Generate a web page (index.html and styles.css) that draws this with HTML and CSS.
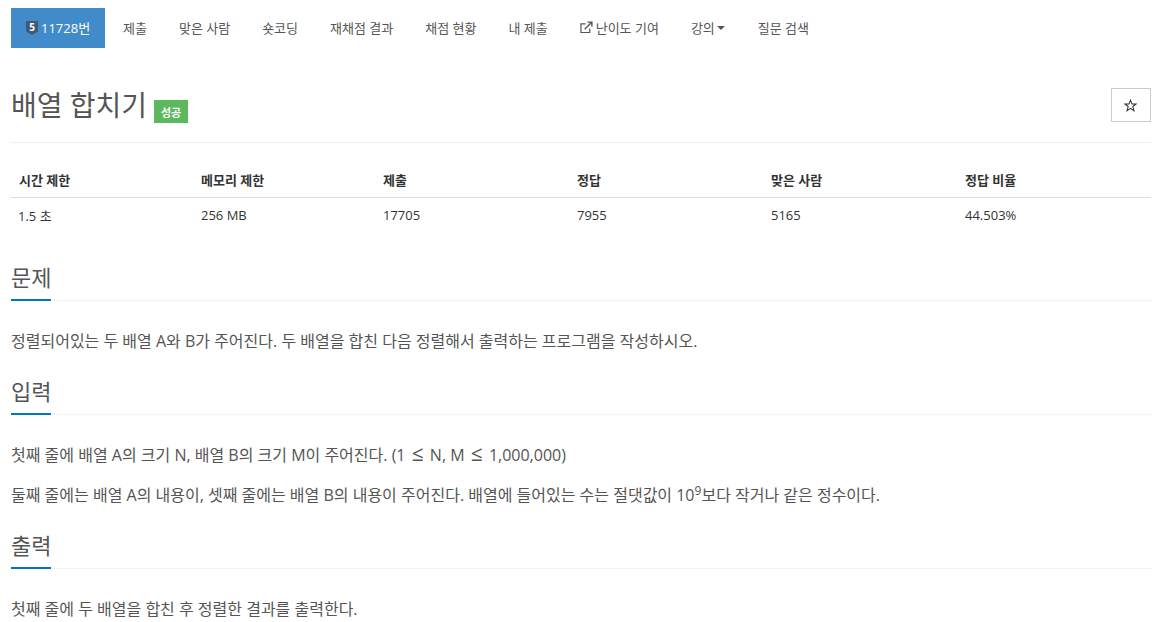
FILE: index.html
```html
<!DOCTYPE html>
<html lang="ko">
<head>
<meta charset="utf-8">
<title>배열 합치기</title>
<link rel="stylesheet" href="styles.css">
</head>
<body>
<div class="page">
  <nav class="nav">
    <a class="nav-item active"><svg class="tier" viewBox="0 0 12 14" width="12" height="14"><path d="M0 0H12V10.5L6 14L0 10.5Z" fill="#3f5a75"/><text x="6" y="9.6" text-anchor="middle" class="tier-num">5</text></svg><span>11728번</span></a>
    <a class="nav-item">제출</a>
    <a class="nav-item">맞은 사람</a>
    <a class="nav-item">숏코딩</a>
    <a class="nav-item">재채점 결과</a>
    <a class="nav-item">채점 현황</a>
    <a class="nav-item">내 제출</a>
    <a class="nav-item"><svg class="ext" viewBox="0 0 14 14" width="13" height="13"><path d="M10.5 8V12.4H1V3H6" fill="none" stroke="#555" stroke-width="1.3"/><path d="M5 9L12 2M8 1.2H12.8V6" fill="none" stroke="#555" stroke-width="1.5"/></svg>난이도 기여</a>
    <a class="nav-item">강의<i class="caret"></i></a>
    <a class="nav-item">질문 검색</a>
  </nav>

  <header class="title-row">
    <div class="title-main"><h1>배열 합치기</h1><span class="badge">성공</span></div>
    <button class="star-btn" type="button"><svg viewBox="0 0 14 14" width="13" height="13"><path d="M7 1.2L8.6 5.4H13L9.5 8.1L10.8 12.6L7 10L3.2 12.6L4.5 8.1L1 5.4H5.4Z" fill="none" stroke="#333" stroke-width="1.1"/></svg></button>
  </header>

  <table class="stats">
    <thead>
      <tr><th class="c1">시간 제한</th><th class="c2">메모리 제한</th><th class="c3">제출</th><th class="c4">정답</th><th class="c5">맞은 사람</th><th>정답 비율</th></tr>
    </thead>
    <tbody>
      <tr><td>1.5 초</td><td>256 MB</td><td>17705</td><td>7955</td><td>5165</td><td>44.503%</td></tr>
    </tbody>
  </table>

  <section class="sec first">
    <h2><span>문제</span></h2>
    <p>정렬되어있는 두 배열 A와 B가 주어진다. 두 배열을 합친 다음 정렬해서 출력하는 프로그램을 작성하시오.</p>
  </section>
  <section class="sec">
    <h2><span>입력</span></h2>
    <p>첫째 줄에 배열 A의 크기 N, 배열 B의 크기 M이 주어진다. (1 <span class="wide">≤</span> N, M <span class="wide">≤</span> 1,000,000)</p>
    <p>둘째 줄에는 배열 A의 내용이, 셋째 줄에는 배열 B의 내용이 주어진다. 배열에 들어있는 수는 절댓값이 10<sup>9</sup>보다 작거나 같은 정수이다.</p>
  </section>
  <section class="sec">
    <h2><span>출력</span></h2>
    <p>첫째 줄에 두 배열을 합친 후 정렬한 결과를 출력한다.</p>
  </section>
</div>
</body>
</html>
```
FILE: styles.css
```css
* { box-sizing: border-box; }
html, body { margin: 0; height: 622px; overflow: hidden; background: #fff; }
body { font-family: "Open Sans", "Noto Sans CJK KR", sans-serif; color: #333; font-size: 14px; }
.page { padding: 8px 7px 0 11px; }

.nav { display: flex; height: 40px; gap: 2px; }
.nav-item { display: flex; align-items: center; padding: 0 15px 2px; font-size: 13px; color: #555; white-space: nowrap; }
.nav-item.active { background: #428bca; color: #fff; width: 94px; margin-right: 1px; }
.tier { margin-right: 3px; margin-top: 2px; flex: none; }
.tier-num { font: bold 10px "Open Sans", sans-serif; fill: #fff; }
.ext { margin-right: 3px; }
.caret { width: 0; height: 0; margin: 2px 1px 0 2px; border-top: 4px solid #555; border-left: 4px solid transparent; border-right: 4px solid transparent; }

.title-row { display: flex; justify-content: space-between; align-items: flex-start; margin-top: 40px; height: 55px; border-bottom: 1px solid #eee; }
.title-main { display: flex; align-items: flex-start; }
h1 { margin: -1px 0 0; font-size: 28px; font-weight: 400; line-height: 36px; color: #555; }
.badge { margin: 12px 0 0 7px; width: 34px; height: 23px; background: #5cb85c; color: #fff; font-size: 11px; font-weight: 700; display: flex; align-items: center; justify-content: center; }
.star-btn { width: 40px; height: 34px; border: 1px solid #ccc; background: #fff; padding: 0 2px 0 0; display: flex; align-items: center; justify-content: center; }

.stats { width: 100%; margin-top: 18px; border-collapse: collapse; table-layout: fixed; font-size: 13px; }
.stats th { text-align: left; font-weight: 700; color: #333; height: 36px; padding: 2px 8px 0; border-bottom: 1px solid #ddd; }
.stats td { height: 36px; padding: 0 8px; color: #333; }
.stats td:first-child { padding-left: 7px; }
.c1 { width: 182px; } .c2 { width: 182px; } .c3 { width: 194px; } .c4 { width: 194px; } .c5 { width: 194px; }

.sec h2 { margin: 22px 0 0; font-size: 22px; font-weight: 400; line-height: 27px; height: 37px; color: #555; border-bottom: 1px dotted #e8e8e8; }
.sec h2 span { display: inline-block; height: 37px; width: 40px; border-bottom: 2px solid #0076c0; white-space: nowrap; }
.sec.first h2 { margin-top: 31px; }
.sec p { margin: 0; font-size: 16px; line-height: 30px; color: #555; padding-top: 10px; white-space: nowrap; }
.sec p:first-of-type { padding-top: 25px; }
.sec sup { font-size: 12px; line-height: 0; vertical-align: 6px; }
.wide { display: inline-block; width: 16px; text-align: center; font-size: 21px; line-height: 0; }
```
